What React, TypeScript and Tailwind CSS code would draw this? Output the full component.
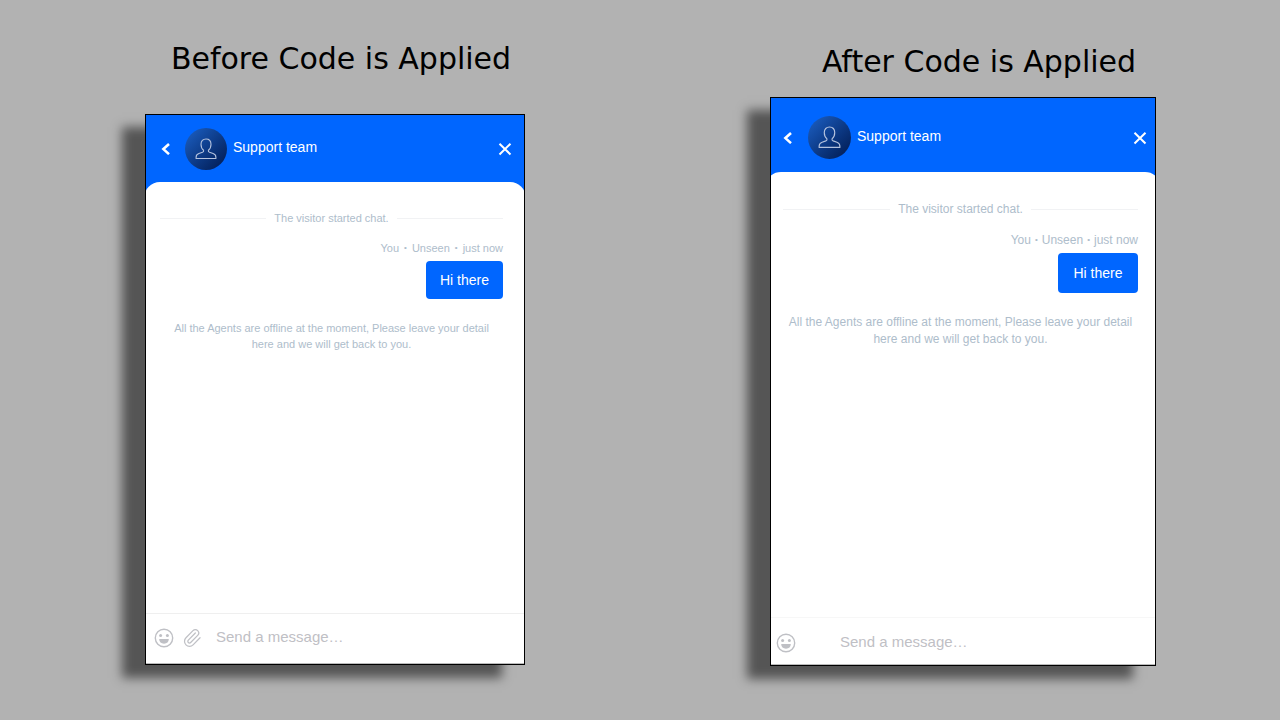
import React from "react";
import { Paperclip } from "lucide-react";

type Theme = {
  id: string;
  title: string;
  attach: boolean;
  section: string;
  heading: string;
  card: string;
  header: string;
  avatar: string;
  personIcon: string;
  name: string;
  body: string;
  started: string;
  meta: string;
  bubble: string;
  offline: string;
  footer: string;
  footerLine: string;
  input: string;
};

const before: Theme = {
  id: "before",
  title: "Before Code is Applied",
  attach: true,
  section: "pt-[41px] pl-[145px] pr-[115px]",
  heading: "pl-3 mb-[37px]",
  card: "h-[551px]",
  header: "h-[67px] pl-3.5 pr-3",
  avatar: "ml-[13px] size-[42px]",
  personIcon: "size-[22px]",
  name: "text-[14px]",
  body: "-mx-0.5 pl-4 pr-[23px] pt-7",
  started: "text-[11px]",
  meta: "mt-3.5 gap-[5px] text-[11px]",
  bubble: "mt-[5px] h-[38px] w-[77px] text-[14px]",
  offline: "mt-[21px] px-2 text-[11px] leading-4",
  footer: "h-[51px] pl-2 pb-0.5",
  footerLine: "border-t-[#efefef]",
  input: "ml-3.5 text-[15px]",
};

const after: Theme = {
  id: "after",
  title: "After Code is Applied",
  attach: false,
  section: "pt-11 pl-[130px] pr-[124px]",
  heading: "pl-8 mb-[17px]",
  card: "h-[569px]",
  header: "h-[74px] pl-[11px] pr-2 pt-[5px]",
  avatar: "ml-3.5 size-[43px]",
  personIcon: "size-[23px]",
  name: "text-[14px]",
  body: "-mx-1.5 pl-[18px] pr-[23px] pt-[29px]",
  started: "text-[12px]",
  meta: "mt-[15px] gap-1 text-[12px]",
  bubble: "mt-[5px] h-[40px] w-[80px] text-[14px]",
  offline: "mt-[21px] text-[12px] leading-[17px]",
  footer: "h-[48px] pl-[5px] pt-[3px]",
  footerLine: "border-t-[#f7f7f7]",
  input: "ml-11 text-[15px]",
};

function Chevron() {
  return (
    <svg viewBox="0 0 12 12" className="size-3" fill="none" stroke="white" strokeWidth="2.6" aria-hidden="true">
      <path d="M9 1 3.400 6.100 9 11.100" />
    </svg>
  );
}

function Cross() {
  return (
    <svg viewBox="0 0 14 14" className="size-3.5" fill="none" stroke="white" strokeWidth="2" aria-hidden="true">
      <path d="M1.5 1.7 12.5 12.5M12.5 1.7 1.5 12.5" />
    </svg>
  );
}

function Person({ className }: { className: string }) {
  return (
    <svg viewBox="0 0 22 22" className={className} fill="none" stroke="#b4c2de" strokeWidth="1.1" strokeLinejoin="round" aria-hidden="true">
      <path d="M8.600 12.300C6.900 11 6 9 6 6.200 6 3 8 1 11 1s5 2 5 5.200c0 2.800-.9 4.800-2.600 6.100-.3 1.100.1 1.500 1.100 1.900l3.600 1.300c2 .7 2.800 1.900 2.800 3.700v1.300H1.100v-1.300c0-1.800.8-3 2.800-3.700l3.600-1.300c1-.4 1.400-.8 1.100-1.900Z" />
    </svg>
  );
}

function Smile() {
  return (
    <svg viewBox="0 0 20 20" className="size-5" fill="none" aria-hidden="true">
      <circle cx="10" cy="10" r="8.700" stroke="#bfc0c5" strokeWidth="1.400" />
      <circle cx="6.600" cy="7.500" r="1.500" fill="#bfc0c5" />
      <circle cx="13.400" cy="7.500" r="1.500" fill="#bfc0c5" />
      <path d="M5.200 11h9.600c0 2.800-1.900 4.700-4.800 4.700S5.200 13.800 5.200 11Z" fill="#bfc0c5" />
    </svg>
  );
}

function Dot() {
  return <span className="text-[8px]">•</span>;
}

function ChatPanel({ t }: { t: Theme }) {
  return (
    <section className={`min-w-0 ${t.section}`}>
      <h2 className={`text-center font-['DejaVu_Sans',sans-serif] text-[30px] leading-9 whitespace-nowrap text-black ${t.heading}`}>
        {t.title}
      </h2>
      <div className={`flex flex-col overflow-hidden border border-black bg-[#0066ff] shadow-[-23px_13px_10px_rgba(0,0,0,0.52)] ${t.card}`}>
        <header className={`flex shrink-0 items-center ${t.header}`}>
          <button type="button" aria-label="Back">
            <Chevron />
          </button>
          <span className={`flex items-center justify-center rounded-full bg-linear-to-br from-[#1d62c8] to-[#03194f] ${t.avatar}`}>
            <Person className={t.personIcon} />
          </span>
          <h3 className={`ml-1.5 flex-1 pb-0.5 text-white ${t.name}`}>Support team</h3>
          <button type="button" aria-label="Close">
            <Cross />
          </button>
        </header>
        <div className={`flex flex-1 flex-col rounded-t-2xl bg-white text-[#aebdcb] ${t.body}`}>
          <div className={`flex items-center gap-2 leading-4 ${t.started}`}>
            <hr className="flex-1 border-[#f1f2f4]" />
            <span>The visitor started chat.</span>
            <hr className="flex-1 border-[#f1f2f4]" />
          </div>
          <p className={`flex justify-end leading-4 ${t.meta}`}>
            <span>You</span>
            <Dot />
            <span>Unseen</span>
            <Dot />
            <span>just now</span>
          </p>
          <p className={`flex items-center justify-center self-end rounded bg-[#0066ff] text-white ${t.bubble}`}>Hi there</p>
          <p className={`text-center ${t.offline}`}>
            All the Agents are offline at the moment, Please leave your detail here and we will get back to you.
          </p>
        </div>
        <form className={`flex shrink-0 items-center border-t border-b border-b-[#bbbbbb] bg-white ${t.footer} ${t.footerLine}`}>
          <button type="button" aria-label="Insert emoji">
            <Smile />
          </button>
          {t.attach && (
            <button type="button" aria-label="Attach file" className="ml-2">
              <Paperclip className="size-5 text-[#bfc0c5]" strokeWidth={1.5} />
            </button>
          )}
          <input
            id={`message-${t.id}`}
            type="text"
            aria-label="Message"
            placeholder="Send a message…"
            className={`min-w-0 flex-1 bg-transparent outline-none placeholder:text-[#bfc0c5] ${t.input}`}
          />
        </form>
      </div>
    </section>
  );
}

export default function App() {
  return (
    <main className="grid min-h-screen grid-cols-2 items-start bg-[#b2b2b2] font-['Liberation_Sans',Arial,sans-serif]">
      <ChatPanel t={before} />
      <ChatPanel t={after} />
    </main>
  );
}
